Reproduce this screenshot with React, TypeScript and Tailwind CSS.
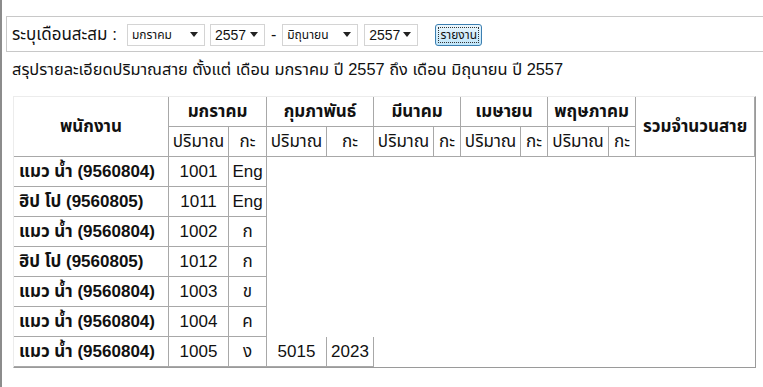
import React from "react";

const months = ["มกราคม", "กุมภาพันธ์", "มีนาคม", "เมษายน", "พฤษภาคม"];

type Row = { name: string; cells: string[] };
const rows: Row[] = [
  { name: "แมว น้ำ (9560804)", cells: ["1001", "Eng"] },
  { name: "ฮิป โป (9560805)", cells: ["1011", "Eng"] },
  { name: "แมว น้ำ (9560804)", cells: ["1002", "ก"] },
  { name: "ฮิป โป (9560805)", cells: ["1012", "ก"] },
  { name: "แมว น้ำ (9560804)", cells: ["1003", "ข"] },
  { name: "แมว น้ำ (9560804)", cells: ["1004", "ค"] },
  { name: "แมว น้ำ (9560804)", cells: ["1005", "ง", "5015", "2023"] },
];

function Arrow() {
  return (
    <svg width="8" height="5" viewBox="0 0 8 5" className="shrink-0">
      <path d="M0 0 H8 L4 5 Z" fill="#222" />
    </svg>
  );
}

function FakeSelect({ text, w, small }: { text: string; w: string; small?: boolean }) {
  return (
    <div
      className={`${w} h-[22px] flex items-center justify-between border border-[#d4d4d4] bg-white pl-[4px] pr-[6px]`}
    >
      <span className={small ? "text-[12px] leading-none" : "text-[14px] leading-none"}>{text}</span>
      <Arrow />
    </div>
  );
}

export default function App() {
  const cell = "border-r border-b border-[#a8a8a8] p-0 h-[30px] text-center";
  return (
    <div
      className="w-[763px] h-[387px] bg-white border-l-2 border-[#8c8c8c] overflow-hidden text-[#111]"
      style={{ fontFamily: "Tahoma, 'Liberation Sans', 'Noto Sans Thai', Loma, Garuda, sans-serif" }}
    >
      <div className="pt-[16px] pl-[4px]">
        <div className="h-[36px] border border-r-0 border-[#c8c8c8] flex items-center pl-[5px] pt-[1px]">
          <span className="text-[17px] leading-none">ระบุเดือนสะสม :</span>
          <div className="ml-[10px]">
            <FakeSelect text="มกราคม" w="w-[78px]" small />
          </div>
          <div className="ml-[5px]">
            <FakeSelect text="2557" w="w-[55px]" />
          </div>
          <span className="mx-[6px] text-[16px] leading-none">-</span>
          <FakeSelect text="มิถุนายน" w="w-[76px]" small />
          <div className="ml-[6px]">
            <FakeSelect text="2557" w="w-[54px]" />
          </div>
          <button className="ml-[17px] w-[47px] h-[22px] rounded-[3px] border border-[#3c7fb1] bg-gradient-to-b from-[#eaf6fd] to-[#bfe5f9] p-[2px]">
            <span className="flex h-full w-full items-center justify-center border border-dotted border-[#333] text-[12px] leading-none">
              รายงาน
            </span>
          </button>
        </div>
        <div className="pl-[6px] mt-[7px] text-[16.4px] leading-[20px]">
          สรุปรายละเอียดปริมาณสาย ตั้งแต่ เดือน มกราคม ปี 2557 ถึง เดือน มิถุนายน ปี 2557
        </div>
        <table
          className="mt-[17px] ml-[7px] table-fixed border-separate border-spacing-0 border-t border-l border-r border-b border-t-[#ececec] border-l-[#ececec] border-r-[#9a9a9a] border-b-[#9a9a9a] w-[743px] text-[17px]"
        >
          <colgroup>
            <col className="w-[155px]" />
            <col className="w-[60px]" />
            <col className="w-[38px]" />
            <col className="w-[60px]" />
            <col className="w-[47px]" />
            <col className="w-[60px]" />
            <col className="w-[27px]" />
            <col className="w-[60px]" />
            <col className="w-[27px]" />
            <col className="w-[61px]" />
            <col className="w-[27px]" />
            <col className="w-[119px]" />
          </colgroup>
          <thead>
            <tr>
              <th rowSpan={2} className={`${cell} font-bold`}>
                พนักงาน
              </th>
              {months.map((m) => (
                <th key={m} colSpan={2} className={`${cell} font-bold`}>
                  {m}
                </th>
              ))}
              <th rowSpan={2} className={`${cell} font-bold`}>
                รวมจำนวนสาย
              </th>
            </tr>
            <tr>
              {months.map((m) => (
                <React.Fragment key={m}>
                  <td className={cell}>ปริมาณ</td>
                  <td className={cell}>กะ</td>
                </React.Fragment>
              ))}
            </tr>
          </thead>
          <tbody>
            {rows.map((r, i) => (
              <tr key={i}>
                <td className={`${cell} !text-left pl-[5px] font-bold`}>{r.name}</td>
                {r.cells.map((c, j) => (
                  <td key={j} className={cell}>
                    {c}
                  </td>
                ))}
              </tr>
            ))}
          </tbody>
        </table>
      </div>
    </div>
  );
}
